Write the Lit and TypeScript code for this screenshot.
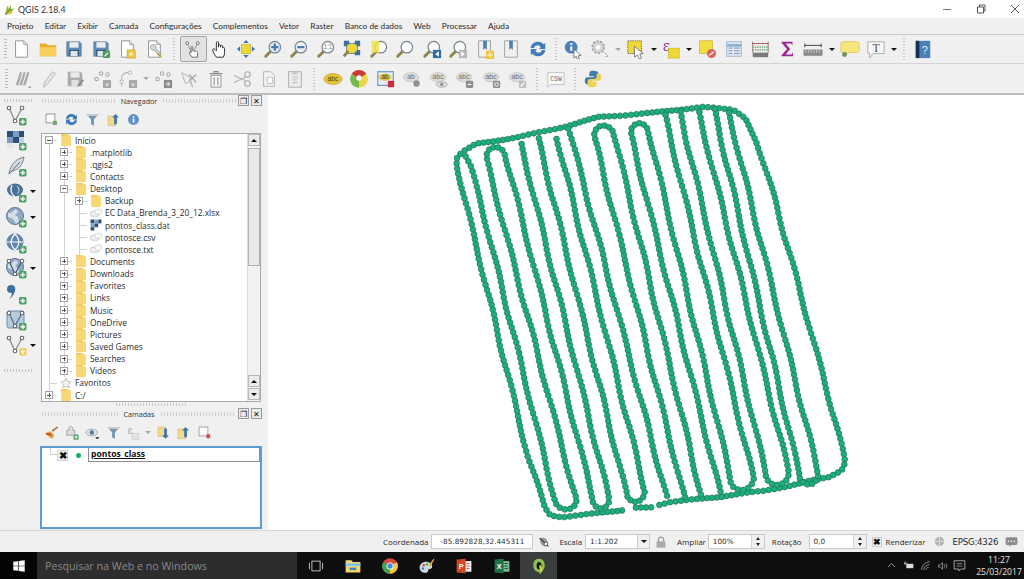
import { LitElement, html, css, svg, nothing } from 'lit';
import { customElement } from 'lit/decorators.js';

type Pt = [number, number];

// lane x at y=200 and y=420, left to right across the field
const X200 = [465, 480, 497, 517, 533, 553, 575, 591, 610, 630, 647, 665, 680, 700, 717, 737, 750, 775];
const X420 = [519, 535, 555, 573, 589, 608, 628, 647, 665, 683, 702, 717, 738, 753, 775, 787, 805, 835];

const lx = (i: number, y: number) => X200[i] + ((X420[i] - X200[i]) * (y - 200)) / 220;
const lane = (i: number, y: number): Pt => [lx(i, y), y];

function hairpin(a: number, b: number, crown: number, top: boolean): Pt[] {
  const r = (lx(b, crown) - lx(a, crown)) / 2;
  const yc = top ? crown + r : crown - r;
  const x1 = lx(a, yc);
  const x2 = lx(b, yc);
  const out: Pt[] = [];
  for (let k = 0; k <= 8; k++) {
    const t = (k / 8) * Math.PI;
    const cx = (x1 + x2) / 2;
    const rr = (x2 - x1) / 2;
    out.push([cx - rr * Math.cos(t), yc + (top ? -1 : 1) * rr * Math.sin(t)]);
  }
  return out;
}

const TRACKS: Pt[][] = [
  // outer loop: bottom left, up the west edge, along the top, down the east edge, back along the bottom
  [
    [622, 510], [590, 514], [563, 517], [551, 515], [545, 507], lane(0, 460), lane(0, 200),
    [457, 165], [457, 157], [462, 152], [475, 144], [520, 137], [562, 127], [600, 117], [650, 113],
    [703, 107], [733, 110], [745, 118], [757, 142], lane(17, 200), lane(17, 420), [845, 462], [842, 470],
    [830, 477], [763, 491], [717, 497], [670, 502], [658, 505],
  ],
  [[652, 507], [633, 508]],
  // the inner passes, joined by their turns
  [
    [466, 157], [470, 165], lane(1, 200),
    ...hairpin(1, 2, 510, false),
    ...hairpin(2, 3, 147, true),
    ...hairpin(3, 4, 508, false),
    [520, 140],
  ],
  [[538, 138], ...hairpin(5, 6, 502, false), [557, 138]],
  [[569, 129], lane(7, 497)],
  [lane(8, 497), ...hairpin(8, 9, 125, true), lane(9, 497)],
  [lane(10, 497), ...hairpin(10, 11, 123, true), ...hairpin(11, 12, 490, false), [664, 112]],
  [[680, 112], ...hairpin(13, 14, 485, false), [698, 110]],
  [[714, 109], ...hairpin(15, 16, 485, false), [728, 110]],
];

function resample(points: Pt[], step: number): Pt[] {
  const out: Pt[] = [points[0]];
  let left = step;
  for (let i = 1; i < points.length; i++) {
    let [x0, y0] = points[i - 1];
    const [x1, y1] = points[i];
    let d = Math.hypot(x1 - x0, y1 - y0);
    while (d >= left) {
      x0 += ((x1 - x0) * left) / d;
      y0 += ((y1 - y0) * left) / d;
      out.push([x0, y0]);
      d -= left;
      left = step;
    }
    left -= d;
  }
  return out;
}

const DOTS = TRACKS.flatMap((t) => resample(t, 5.2)).map(([x, y], i): Pt => [
  x + Math.sin(i * 0.37) * 0.9,
  y + Math.cos(i * 0.53) * 0.4,
]);

@customElement('track-map')
export class TrackMap extends LitElement {
  static styles = css`
    :host {
      display: block;
      flex: 1;
      background: #fff;
    }
    svg {
      display: block;
      width: 100%;
      height: 100%;
    }
  `;

  render() {
    return html`<svg viewBox="268 96 756 433">
      <g fill="#17b07e" stroke="#2f6f58" stroke-width="0.7">
        ${DOTS.map(([x, y]) => svg`<circle cx=${x.toFixed(1)} cy=${y.toFixed(1)} r="2.9"></circle>`)}
      </g>
    </svg>`;
  }
}

/* ---- icons, all on a 22 unit box ---- */

const magnifier = (inner: unknown = nothing, lens = '#fff') => svg`
  <path d="M8 14 3 19" stroke="#8f8449" stroke-width="3.2" stroke-linecap="round"/>
  <circle cx="13" cy="9" r="6.3" fill=${lens} stroke="#76848e" stroke-width="1.3"/>
  ${inner}`;

const floppy = (c: string) => svg`
  <path d="M3 3h14l2 2v14H3z" fill=${c} stroke="#5d6f83" stroke-width=".6"/>
  <rect x="6" y="3.5" width="10" height="6" fill="#e9eef3"/>
  <rect x="6" y="12" width="10" height="7" fill="#22384f"/>
  <rect x="7" y="13" width="8" height="6" fill="#dfe5ea"/>`;

const plusBadge = svg`<rect x="14" y="14" width="7.5" height="7.5" rx="1.4" fill="#4fa365"/><path d="M17.75 15.5v4.5M15.5 17.75H20" stroke="#fff" stroke-width="1.4"/>`;
const page = (fill = '#fff') => svg`<path d="M5 2h9l4 4v14H5z" fill=${fill} stroke="#8d8d8d" stroke-width="1"/><path d="M14 2v4h4" fill="#e4e4e4" stroke="#8d8d8d" stroke-width=".8"/>`;
const hand = (c: string) => svg`<path d="M7 20c-2-3-4-6-4-8 0-1.500 1.500-1.500 2.500-.5L7 13V4c0-1.500 2.300-1.500 2.300 0v5-1.500c0-1.500 2.300-1.500 2.300 0V9 8c0-1.500 2.300-1.500 2.300 0v2c0-1 2.100-1 2.100.3V15c0 2-.5 3.500-1.500 5z" fill="#fff" stroke=${c} stroke-width="1.100"/>`;
const grayAbc = (t: string, after: unknown = nothing) => svg`
  <ellipse cx="10" cy="9" rx="8.500" ry="5" fill="#dcdcdc" stroke="#b4b4b4" stroke-width=".6"/>
  <text x="10" y="11.500" font-size="7.500" text-anchor="middle" fill="#6f6f6f" font-family="Liberation Sans">${t}</text>${after}`;
const grayPts = (after: unknown) => svg`<g fill="#fff" stroke="#a8a8a8" stroke-width="1.200"><circle cx="5" cy="11" r="1.800"/><circle cx="10" cy="5" r="1.800"/><circle cx="17" cy="6" r="1.800"/></g>${after}`;
const grayBox = (inner = '') => svg`<rect x="12" y="12" width="9" height="9" rx="1" fill="#a7a7a7"/><text x="16.500" y="19.500" font-size="7" text-anchor="middle" fill="#fff" font-family="Liberation Sans">${inner}</text>`;
const vNodes = (c = '#7c8b7a') => svg`<path d="M4 4 10 17 17 4" fill="none" stroke=${c} stroke-width="1.200"/><g fill="#fff" stroke="#666" stroke-width="1.100"><circle cx="4" cy="4" r="1.800"/><circle cx="17" cy="4" r="1.800"/><circle cx="10" cy="17" r="1.800"/></g>`;
const globe = svg`<circle cx="10" cy="10" r="8.500" fill="#8ea8c6" stroke="#5d7796" stroke-width="1"/><path d="M3 7c4 1 5-3 8-4l2 3-3 3 3 2 1 4-3 3-3-5-5-2z" fill="#d5dde6"/>`;
const pageGray = svg`<path d="M5 3h8l4 4v12H5z" fill="#f3f3f3" stroke="#b0b0b0"/>`;

const ICONS: Record<string, unknown> = {
  logo: svg`<path d="M3 20 8 4l2 6 3-7 1 8 5-3-6 10z" fill="#8ab53a"/><path d="M5 19 11 11l5 7z" fill="#e7c72d"/><path d="M4 20 14 10" stroke="#3f7d22" stroke-width="1.500"/>`,
  new: page(),
  open: svg`<path d="M2 5h7l2 2h9v12H2z" fill="#e9ad32"/><path d="M2 9h18v10H2z" fill="#f9cd5a"/>`,
  save: floppy('#5e8cbd'),
  saveas: svg`${floppy('#5e8cbd')}<rect x="13" y="13" width="8" height="8" rx="1.500" fill="#4b9a5e"/><path d="M15 19l4-4" stroke="#fff" stroke-width="1.300"/>`,
  newcomp: svg`${page()}<rect x="11" y="12" width="9" height="9" fill="#f0c53c" stroke="#b69322" stroke-width=".5"/><path d="M13 16.500h5M15.500 14v5" stroke="#fff"/>`,
  compman: svg`${page()}<path d="M8 7c3-2 6 0 5 3l6 7-2 2-6-7c-3 1-5-2-3-5" fill="#d9d9d9" stroke="#777" stroke-width=".7"/><path d="M15 16l4 4" stroke="#c7a431" stroke-width="2"/>`,
  touch: svg`<g transform="translate(1 1) scale(.9)">${vNodes('#9a9a9a')}</g><path d="M10 20c-1-2-3-3-3-5 0-1 1-1 2 0V9c0-1 1.700-1 1.700 0v4l4 .5c1 .2 1.300 1 1.300 2L16 20z" fill="#fff" stroke="#555" stroke-width=".9"/>`,
  pan: svg`${hand('#333')}`,
  panmap: svg`<rect x="6" y="6" width="10" height="10" fill="#eed83a" stroke="#b59f12" stroke-width=".6"/><path d="M11 1l3 3.500H8zM11 21l3-3.500H8zM1 11l3.500-3v6zM21 11l-3.500-3v6z" fill="#3b74b3"/>`,
  zoomin: magnifier(svg`<path d="M13 5v8M9 9h8" stroke="#3f79b8" stroke-width="2.400"/>`, '#e7eef6'),
  zoomout: magnifier(svg`<path d="M9 9h8" stroke="#3f79b8" stroke-width="2.400"/>`, '#eef1f4'),
  zoom11: magnifier(svg`<text x="13" y="11.500" font-size="7" text-anchor="middle" fill="#777" font-family="Liberation Sans">1:1</text>`),
  zoomfull: svg`<rect x="5" y="5" width="12" height="11" fill="#eed83a" stroke="#5b6f80" stroke-width=".8"/><path d="M2 2h6v4H6v2H2zM20 2h-6v4h2v2h4zM20 18h-6v-4h2v-2h4z" fill="#3d6f9f"/><path d="M7 13 2 19" stroke="#8f8449" stroke-width="3"/>`,
  zoomsel: magnifier(svg`<rect x="3" y="2" width="8" height="13" fill="#f0e04d" opacity=".85"/>`),
  zoomlayer: magnifier(nothing),
  zoomlast: magnifier(svg`<rect x="12" y="12" width="9" height="9" fill="#2f6ca8"/><path d="M18.500 13.500 14.500 16.500l4 3z" fill="#fff"/>`),
  zoomnext: magnifier(svg`<rect x="12" y="12" width="9" height="9" fill="#b8b8b8"/><path d="M14.500 13.500l4 3-4 3z" fill="#fff"/>`),
  bookmark: svg`<path d="M4 2h13v18H4z" fill="#f1f1f1" stroke="#9c9c9c"/><path d="M9 2h4v10l-2-2-2 2z" fill="#4e7fb1"/><rect x="12" y="13" width="9" height="9" fill="#efc53a"/><path d="M16.500 14.500v6M13.500 17.500h6" stroke="#fff"/>`,
  bookmarks: svg`<path d="M4 2h14v18H4z" fill="#f1f1f1" stroke="#9c9c9c"/><path d="M9 2h4v10l-2-2-2 2z" fill="#4e7fb1"/>`,
  refresh: svg`<path d="M3 10c0-4 4-7 8-7 3 0 5 1 6 3l2-2v7h-7l2-2c-1-1-2-2-3-2-3 0-4 1-4 3zM19 12c0 4-4 7-8 7-3 0-5-1-6-3l-2 2v-7h7l-2 2c1 1 2 2 3 2 3 0 4-1 4-3z" fill="#3f7cb7"/>`,
  identify: svg`<circle cx="9" cy="9" r="7" fill="#4c82b9"/><rect x="8" y="8" width="2.200" height="5" fill="#fff"/><rect x="8" y="4.500" width="2.200" height="2" fill="#fff"/><path d="M12 11l8 7-3.500.5L18 22l-2 .5-1.500-3.500-2.500 2z" fill="#fff" stroke="#555" stroke-width=".8"/>`,
  action: svg`<circle cx="9" cy="9" r="6.500" fill="#d4d4d4" stroke="#a3a3a3" stroke-width="2" stroke-dasharray="2.500 1.500"/><circle cx="9" cy="9" r="2.500" fill="#fff"/><path d="M12 12l8 7-3.500.5" fill="#fff" stroke="#999" stroke-width=".8"/>`,
  select: svg`<rect x="2" y="2" width="15" height="14" fill="#eed83a" stroke="#444" stroke-width=".8" stroke-dasharray="1.500 1"/><path d="M9 8l10 8-4 .5 2 4.500-2.500 1-2-4.500-3 2.500z" fill="#fff" stroke="#555" stroke-width=".8"/>`,
  epsilon: svg`<text x="6" y="13" font-size="16" fill="#8a3b8e" text-anchor="middle" font-family="DejaVu Serif">ε</text><rect x="8" y="10" width="12" height="11" fill="#eed83a" stroke="#b59f12" stroke-width=".5"/>`,
  epsilonGray: svg`<text x="6" y="13" font-size="15" fill="#a3a3a3" text-anchor="middle" font-family="DejaVu Serif">ε</text><rect x="9" y="12" width="10" height="9" fill="#e2e2e2" stroke="#bdbdbd" stroke-width=".6"/>`,
  deselect: svg`<rect x="3" y="2" width="14" height="14" fill="#f4df42" stroke="#b8a11a" stroke-width=".6"/><circle cx="16" cy="16" r="5" fill="#d9665f"/><path d="M13.500 18 18.500 14" stroke="#fff" stroke-width="1.300"/>`,
  table: svg`<rect x="3" y="3" width="16" height="16" fill="#dce7f2" stroke="#9db4cb"/><path d="M3 7h16" stroke="#8eb0d2" stroke-width="3"/><path d="M5 10h4M11 10h6M5 13h4M11 13h6M5 16h4M11 16h6" stroke="#7e94aa"/>`,
  stats: svg`<rect x="3" y="15" width="17" height="5" fill="#7a7a7a"/><path d="M3 15V3M20 15V3" stroke="#8a6d65"/><path d="M3 5h17" stroke="#a65b5b"/><path d="M3 9h17M3 12h17" stroke="#83b08b" stroke-width="2" stroke-dasharray="1.500 1"/><path d="M3 5h17" stroke="#b44" stroke-dasharray="2 3"/>`,
  sigma: svg`<path d="M5 3h12v4l-1.500-2H9.500l5 6-5 6H16l1.500-2.500V19H5v-1l6-7-6-7z" fill="#a1259b"/>`,
  ruler: svg`<rect x="1" y="12" width="20" height="6" fill="#8d8d8d" stroke="#666" stroke-width=".5"/><path d="M3 12v3M6 12v3M9 12v3M12 12v3M15 12v3M18 12v3" stroke="#eee" stroke-width=".7"/><path d="M2 7h18M2 5v4M20 5v4" stroke="#333"/>`,
  balloon: svg`<path d="M4 3h14c2 0 3 1 3 3v6c0 2-1 3-3 3H9l-4 4-1-4c-2 0-3-1-3-3V6c0-2 1-3 3-3z" fill="#f7e77d" stroke="#d8c85e"/><circle cx="5" cy="17" r="2.700" fill="#6f8f5e"/>`,
  textbox: svg`<path d="M2 3h18v13H8l-4 5v-5H2z" fill="#f6f6f6" stroke="#a8a8a8"/><text x="11" y="14" font-size="13" text-anchor="middle" fill="#555" font-family="Liberation Serif">T</text>`,
  help: svg`<rect x="3" y="2" width="16" height="19" fill="#4d80b7"/><rect x="3" y="2" width="4" height="19" fill="#17314d"/><text x="13" y="16" font-size="12" text-anchor="middle" fill="#e6eef5" font-family="Liberation Sans">?</text>`,
  digit: svg`<path d="M4 18 9 3l2 1-4 14zM8 18 13 3l2 1-4 14zM12 18 17 3l2 1-4 14z" fill="#a9a9a9"/><path d="M18 20h3" stroke="#777"/>`,
  pencil: svg`<path d="M5 20l1-5L15 3l3 2-9 12z" fill="#e7e7e7" stroke="#b5b5b5"/>`,
  savegray: svg`<path d="M3 3h14l2 2v14H3z" fill="#aaa"/><rect x="6" y="3.500" width="10" height="6" fill="#e9e9e9"/><rect x="7" y="12" width="8" height="7" fill="#e0e0e0"/><path d="M14 19l6-7" stroke="#888" stroke-width="2"/>`,
  addpt: grayPts(grayBox('×')),
  node: svg`<path d="M4 19V10c0-4 3-6 8-6" fill="none" stroke="#b3b3b3" stroke-width="1.200"/><circle cx="13" cy="4" r="1.800" fill="#fff" stroke="#aaa"/><circle cx="4" cy="14" r="1.800" fill="#fff" stroke="#aaa"/>${grayBox('×')}`,
  movept: grayPts(svg`<rect x="12" y="12" width="9" height="9" fill="#8c8c8c"/><path d="M14 16.500h4M16 14.500l2.500 2-2.500 2" stroke="#fff" fill="none"/>`),
  nodetool: svg`<path d="M3 4l9 5 3 11-3-6-5 2z" fill="none" stroke="#b1b1b1"/><path d="M11 13l8-7M11 6l8 9" stroke="#a3a3a3" stroke-width="1.300"/>`,
  trash: svg`<path d="M4 5h14M9 5V3h4v2" stroke="#8a8a8a" fill="none" stroke-width="1.400"/><path d="M5.500 7h11v13h-11z" fill="#f7f7f7" stroke="#8f8f8f"/><path d="M9 9v9M13 9v9" stroke="#999" stroke-width="1.300"/>`,
  cut: svg`<path d="M2 7l13 6M2 15l13-6" stroke="#b9b9b9" stroke-width="1.300"/><circle cx="17" cy="6" r="3" fill="none" stroke="#a5a5a5" stroke-width="1.200"/><circle cx="17" cy="16" r="3" fill="none" stroke="#a5a5a5" stroke-width="1.200"/>`,
  copy: svg`${pageGray}<path d="M9 9h6v7H9z" fill="#fff" stroke="#bbb"/>`,
  paste: svg`<rect x="4" y="3" width="14" height="17" fill="#ececec" stroke="#aaa"/><path d="M8 3h6v3H8z" fill="#c9c9c9"/><path d="M8 9h6M8 12h6M8 15h6" stroke="#b7b7b7"/>`,
  abcY: svg`<ellipse cx="11" cy="11" rx="10" ry="6" fill="#e9c233" stroke="#b3931b" stroke-width=".6"/><text x="11" y="13.500" font-size="7.500" text-anchor="middle" fill="#4d4315" font-family="Liberation Sans">abc</text>`,
  wheel: svg`<circle cx="11" cy="11" r="9.500" fill="#f3f3f3"/><path d="M11 11 3 5.500A9.500 9.500 0 0 1 19 5.500z" fill="#cc3a33"/><path d="M11 11V20.500A9.500 9.500 0 0 1 3 5.500z" fill="#78b94b"/><path d="M11 11V20.500A9.500 9.500 0 0 0 19 5.500z" fill="#ecd748"/><circle cx="11" cy="10" r="3" fill="#fff"/>`,
  abLock: svg`<rect x="2" y="3" width="17" height="15" fill="#e7eef6" stroke="#5d93c8" stroke-width="1.200"/><ellipse cx="10" cy="9" rx="7" ry="4" fill="#e5c244"/><text x="10" y="11.500" font-size="7" text-anchor="middle" fill="#333" font-family="Liberation Sans">ab</text><rect x="13" y="13" width="7" height="7" rx="1" fill="#c72e3d"/>`,
  abPin: grayAbc('ab', svg`<circle cx="16" cy="16" r="3.500" fill="#8f8f8f"/>`),
  abEye: grayAbc('abc', svg`<ellipse cx="14" cy="17" rx="6" ry="3" fill="#ddd" stroke="#888" stroke-width=".6"/><circle cx="14" cy="17" r="1.500" fill="#777"/>`),
  abMove: grayAbc('abc', svg`<rect x="12" y="13" width="8" height="8" rx="1.500" fill="#8f8f8f"/><path d="M14 17h4" stroke="#fff" stroke-width="1.300"/>`),
  abRot: grayAbc('abc', svg`<rect x="12" y="13" width="8" height="8" rx="1.500" fill="#8f8f8f"/><circle cx="16" cy="17" r="2" fill="none" stroke="#fff"/>`),
  abEdit: grayAbc('abc', svg`<rect x="12" y="13" width="8" height="8" rx="1" fill="#c1c1c1"/><path d="M14 19l4-4" stroke="#fff" stroke-width="1.300"/>`),
  csw: svg`<path d="M2 4h18v13H5l-3 3z" fill="#fafafa" stroke="#bdbdbd"/><text x="11" y="13" font-size="7" text-anchor="middle" fill="#666" font-family="Liberation Mono">CSW</text>`,
  python: svg`<path d="M11 2C7 2 7 4 7 6v2h5v1H5C3 9 2 10 2 13s1 4 3 4h2v-3c0-2 1-3 3-3h4c2 0 3-1 3-3V5c0-2-2-3-6-3z" fill="#3f7bac"/><path d="M11 20c4 0 4-2 4-4v-2h-5v-1h7c2 0 3-1 3-4s-1-4-3-4h-2v3c0 2-1 3-3 3H8c-2 0-3 1-3 3v3c0 2 2 3 6 3z" fill="#f0cf52"/>`,
  addLine: svg`${vNodes()}${plusBadge}`,
  addRaster: svg`<g fill="#2d5078"><rect x="2" y="2" width="6" height="6"/><rect x="14" y="2" width="5" height="6"/><rect x="8" y="8" width="6" height="6"/></g><g fill="#7d9cc0"><rect x="8" y="2" width="6" height="6"/><rect x="2" y="8" width="6" height="6"/></g><rect x="14" y="8" width="5" height="6" fill="#bfd0e2"/><rect x="2" y="14" width="6" height="5" fill="#dfe7ef"/>${plusBadge}`,
  addCsv: svg`<path d="M4 18C6 9 11 4 19 2c-1 7-5 13-12 14l-3 3z" fill="#d3dbe2" stroke="#5d6b77" stroke-width=".8"/><path d="M4 19 15 7" stroke="#67727c"/>${plusBadge}`,
  addPg: svg`<ellipse cx="10" cy="9" rx="8" ry="6.500" fill="#4a7398"/><path d="M7 4c-2 4-1 9 2 11l2 3" fill="none" stroke="#fff" stroke-width="1.300"/><path d="M12 5c3 2 2 7 0 8" fill="none" stroke="#cfe0ee"/>${plusBadge}`,
  addWorld: svg`${globe}${plusBadge}`,
  addWcs: svg`<circle cx="10" cy="10" r="8.500" fill="#6187af"/><path d="M2 10h16M10 2c-5 5-5 11 0 16M10 2c5 5 5 11 0 16" fill="none" stroke="#fff" stroke-width="1.200"/>${plusBadge}`,
  addWfs: svg`${globe}${vNodes('#3d5773')}${plusBadge}`,
  addOra: svg`<path d="M6 2c3 0 5 2 4 6s-4 7-6 8c2-2 3-4 3-6-3 0-5-1-5-4s2-4 4-4z" fill="#3b6f9e"/>${plusBadge}`,
  addVl: svg`<rect x="2" y="2" width="17" height="17" rx="2" fill="#b8cbde" stroke="#6f8cac"/>${vNodes('#4d6b8a')}${plusBadge}`,
  newLayer: svg`${vNodes()}<rect x="14" y="14" width="7.500" height="7.500" rx="1.400" fill="#f1cf5b"/><path d="M17.750 15.500v4.500M15.500 17.750H20" stroke="#fff"/>`,
  boxSel: svg`<rect x="3" y="3" width="13" height="13" fill="#fff" stroke="#6f6f6f"/><rect x="13" y="13" width="6" height="6" fill="#75a56f"/>`,
  filter: svg`<path d="M2 3h18l-7 8v9l-4-2v-7z" fill="#6f95b5"/><path d="M2 3h18l-2 3H4z" fill="#c9c9c9"/>`,
  collapse: svg`<path d="M3 6h11v14H3z" fill="#f1d98e" stroke="#b9a15a" stroke-width=".6"/><path d="M14 3l5 5h-3v10h-4V8H9z" fill="#3f74aa"/>`,
  expand: svg`<path d="M3 3h11v14H3z" fill="#f1d98e" stroke="#b9a15a" stroke-width=".6"/><path d="M14 20l5-5h-3V5h-4v10H9z" fill="#3f74aa"/>`,
  info: svg`<circle cx="11" cy="11" r="8" fill="#5d92c7"/><rect x="10" y="9.500" width="2.300" height="6" fill="#fff"/><rect x="10" y="6" width="2.300" height="2.200" fill="#fff"/>`,
  brush: svg`<path d="M2 12l7-3 6 6-3 5c-3-2-7-4-10-8z" fill="#e49a33"/><path d="M3 13l8 1" stroke="#bb3a2c" stroke-width="2"/><path d="M12 9l8-6" stroke="#8a6a2a" stroke-width="2"/>`,
  addGroup: svg`<path d="M7 5c0-4 6-4 6 0v3h3v7H4V8h3z" fill="#dcdcdc" stroke="#8d8d8d"/>${plusBadge}`,
  eye: svg`<ellipse cx="10" cy="11" rx="8.500" ry="5" fill="#dfe4e9" stroke="#8397a8"/><circle cx="10" cy="11" r="3.200" fill="#5b7895"/><path d="M15 18h6l-3 3z" fill="#111"/>`,
  removeBox: svg`<rect x="3" y="3" width="13" height="13" fill="#fff" stroke="#7d7d7d"/><circle cx="16.500" cy="16.500" r="3.200" fill="#c95858"/>`,
  mouse: svg`<ellipse cx="11" cy="11" rx="5.500" ry="7.500" fill="#9a9a9a" transform="rotate(-35 11 11)"/><path d="M4 5l14 13" stroke="#333" stroke-width="1.800"/><circle cx="14" cy="14" r="2.800" fill="#fff" stroke="#333"/>`,
  lock: svg`<path d="M7 10V7c0-5 8-5 8 0v3" fill="none" stroke="#9d9d9d" stroke-width="2"/><rect x="4" y="10" width="14" height="10" rx="1" fill="#aaa"/>`,
  statGlobe: svg`<circle cx="11" cy="11" r="8" fill="#b4b4b4"/><path d="M3 11h16M11 3v16" stroke="#d9d9d9" stroke-width="1.600"/>`,
  msg: svg`<path d="M3 4h16c1 0 2 1 2 2v9c0 1-1 2-2 2h-8l-4 3v-3H3c-1 0-2-1-2-2V6c0-1 1-2 2-2z" fill="#8d8d8d"/><g fill="#fff"><circle cx="6" cy="10.500" r="1.300"/><circle cx="11" cy="10.500" r="1.300"/><circle cx="16" cy="10.500" r="1.300"/></g>`,
  file: svg`<rect x="1" y="8" width="15" height="9" rx="3" fill="#f2f2f2" stroke="#a9a9a9"/><rect x="9" y="4" width="12" height="9" rx="3" fill="#fbfbfb" stroke="#b8b8b8"/>`,
  folder: svg`<path d="M2 0h11l7 3v19H2z" fill="#f8d777"/><path d="M2 0h11v3H2z" fill="#f3c95a"/>`,
  star: svg`<path d="M11 2l3 6 6 1-4.500 4.500L17 20l-6-3-6 3 1.500-6.500L2 9l6-1z" fill="#f4f4f4" stroke="#9c9c78"/>`,
  rasterFile: svg`<g fill="#2d5078"><rect x="1" y="1" width="7" height="7"/><rect x="15" y="1" width="6" height="7"/><rect x="8" y="8" width="7" height="7"/><rect x="1" y="15" width="7" height="6"/></g><g fill="#85a3c5"><rect x="8" y="1" width="7" height="7"/><rect x="1" y="8" width="7" height="7"/></g>`,
  // taskbar
  win: svg`<path d="M2 4.500 9.500 3.500V10.500H2zM10.500 3.300 20 2V10.500H10.500zM2 11.500H9.500V18.500L2 17.500zM10.500 11.500H20V20L10.500 18.700z" fill="#fff"/>`,
  taskview: svg`<rect x="6" y="5" width="10" height="12" fill="none" stroke="#ddd"/><path d="M3 7v8M19 7v8" stroke="#ddd"/>`,
  explorer: svg`<path d="M2 4h7l2 2h9v13H2z" fill="#f3d374"/><rect x="2" y="8" width="18" height="3" fill="#75c7ea"/><rect x="7" y="13" width="8" height="3" fill="#3889b8"/>`,
  chrome: svg`<circle cx="11" cy="11" r="9.500" fill="#da4a3c"/><path d="M11 11 19.500 6.500A9.500 9.500 0 0 1 11 20.500z" fill="#f4c93a"/><path d="M11 11V20.500A9.500 9.500 0 0 1 2.800 6z" fill="#3ea555"/><circle cx="11" cy="11" r="4.300" fill="#fff"/><circle cx="11" cy="11" r="3.300" fill="#4a89dc"/>`,
  paint: svg`<path d="M2 13c0-5 5-8 10-7 4 1 6 4 5 7-1 2-3 1-4 2s0 3-2 4c-4 1-9-1-9-6z" fill="#cdd9e3"/><circle cx="7" cy="10" r="1.500" fill="#d94b3c"/><circle cx="11" cy="9" r="1.500" fill="#39a34a"/><circle cx="6" cy="14" r="1.500" fill="#3a7fc4"/><path d="M13 10 19 2l1 1-5 9z" fill="#e9b63b"/>`,
  ppt: svg`<rect x="9" y="5" width="11" height="13" fill="#f4f4f4"/><path d="M2 3l11-1v18L2 19z" fill="#d24726"/><text x="7.500" y="14.500" font-size="9" text-anchor="middle" fill="#fff" font-family="Liberation Sans" font-weight="700">P</text><path d="M14 8h4M14 11h4M14 14h4" stroke="#d24726"/>`,
  excel: svg`<rect x="9" y="5" width="11" height="13" fill="#7dbb95"/><path d="M2 3l11-1v18L2 19z" fill="#1f7246"/><text x="7.500" y="14.500" font-size="9" text-anchor="middle" fill="#fff" font-family="Liberation Sans" font-weight="700">X</text><path d="M14 8h4M14 11h4M14 14h4" stroke="#123"/>`,
  qgis: svg`<path d="M11 2c-5 0-7 4-7 8 0 5 3 8 6 8l3 3 1-3c3-2 4-5 4-8 0-4-2-8-7-8z" fill="#8cc24a"/><path d="M11 6c-2 0-3 2-3 5 0 2 1 3 2 4h2c1-1 2-3 2-5 0-2-1-4-3-4z" fill="#111"/><path d="M12 10l2 8" stroke="#f1d548" stroke-width="2"/>`,
  trayUp: svg`<path d="M4 14l7-7 7 7" fill="none" stroke="#ddd" stroke-width="1.300"/>`,
  trayBat: svg`<rect x="6" y="7" width="13" height="8" fill="#ddd"/><path d="M3 3l6 4" stroke="#ddd"/><rect x="2" y="5" width="3" height="3" fill="#ddd"/>`,
  trayWifi: svg`<path d="M3 18C3 10 10 4 18 3M7 18C7 13 12 9 17 8M11 18c0-2 2-5 5-5" fill="none" stroke="#ddd" stroke-width="1.100"/>`,
  traySound: svg`<path d="M3 9h3l4-4v12l-4-4H3z" fill="none" stroke="#ddd"/><path d="M13 8c1.500 2 1.500 4 0 6M16 6c2.500 3 2.500 7 0 10" fill="none" stroke="#ddd"/>`,
  trayChat: svg`<path d="M2 3h18v14h-7l-3 3v-3H2z" fill="none" stroke="#ddd" stroke-width="1.200"/><path d="M6 8h10M6 12h10" stroke="#ddd"/>`,
};

const ico = (name: string, size = 20) =>
  html`<svg class="ico" width=${size} height=${size} viewBox="0 0 22 22">${ICONS[name]}</svg>`;

type ToolItem = string | { sep: number } | { arrow: number; dim?: boolean } | { active: string };

const TOOLBAR_ONE: ToolItem[] = [
  'new', 'open', 'save', 'saveas', 'newcomp', 'compman', { sep: 13 }, { active: 'touch' }, 'pan', 'panmap',
  'zoomin', 'zoomout', 'zoom11', 'zoomfull', 'zoomsel', 'zoomlayer', 'zoomlast', 'zoomnext', 'bookmark',
  'bookmarks', 'refresh', { sep: 9 }, 'identify', 'action', { arrow: 10, dim: true }, 'select', { arrow: 8 },
  'epsilon', { arrow: 10 }, 'deselect', 'table', 'stats', 'sigma', 'ruler', { arrow: 10 }, 'balloon', 'textbox',
  { arrow: 8 }, { sep: 12 }, 'help',
];

const TOOLBAR_TWO: ToolItem[] = [
  'digit', 'pencil', 'savegray', 'addpt', 'node', { arrow: 8, dim: true }, 'movept', 'nodetool', 'trash', 'cut',
  'copy', 'paste', { sep: 11 }, 'abcY', 'wheel', 'abLock', 'abPin', 'abEye', 'abMove', 'abRot', 'abEdit',
  { sep: 11 }, 'csw', { sep: 11 }, 'python',
];

type TreeRow = { label: string; level: number; exp?: '+' | '-'; icon: string };

const dir = (label: string, level = 1, exp: '+' | '-' = '+'): TreeRow => ({ label, level, exp, icon: 'folder' });

const TREE: TreeRow[] = [
  dir('Início', 0, '-'),
  dir('.matplotlib'),
  dir('.qgis2'),
  dir('Contacts'),
  dir('Desktop', 1, '-'),
  dir('Backup', 2),
  { label: 'EC Data_Brenda_3_20_12.xlsx', level: 2, icon: 'file' },
  { label: 'pontos_class.dat', level: 2, icon: 'rasterFile' },
  { label: 'pontosce.csv', level: 2, icon: 'file' },
  { label: 'pontosce.txt', level: 2, icon: 'file' },
  dir('Documents'),
  dir('Downloads'),
  dir('Favorites'),
  dir('Links'),
  dir('Music'),
  dir('OneDrive'),
  dir('Pictures'),
  dir('Saved Games'),
  dir('Searches'),
  dir('Videos'),
  { label: 'Favoritos', level: 0, icon: 'star' },
  dir('C:/', 0),
];

const MENUS = ['Projeto', 'Editar', 'Exibir', 'Camada', 'Configurações', 'Complementos', 'Vetor', 'Raster', 'Banco de dados', 'Web', 'Processar', 'Ajuda'];
const SIDE_TOOLS: [string, boolean][] = [
  ['addLine', false], ['addRaster', false], ['addCsv', false], ['addPg', true], ['addWorld', true], ['addWcs', false],
  ['addWfs', true], ['addOra', false], ['addVl', false], ['newLayer', true],
];
const NAV_TOOLS = ['boxSel', 'refresh', 'filter', 'collapse', 'info'];
const TASK_APPS = ['explorer', 'chrome', 'paint', 'ppt', 'excel'];

@customElement('app-root')
export class AppRoot extends LitElement {
  static styles = css`
    :host {
      display: flex;
      flex-direction: column;
      width: 1024px;
      height: 579px;
      overflow: hidden;
      background: #f0f0f0;
      color: #2a2a2a;
      font-family: 'Open Sans', 'Liberation Sans', sans-serif;
      font-size: 8.4px;
    }
    .ico {
      display: block;
      flex: none;
    }
    .titlebar {
      display: flex;
      align-items: center;
      height: 18px;
      background: #fff;
      padding-left: 3px;
      font-family: Lato, 'Open Sans', sans-serif;
      font-size: 8.8px;
      color: #333;
    }
    .titlebar .name {
      margin-left: 2px;
      flex: 1;
    }
    .winbtn {
      width: 34px;
      display: flex;
      justify-content: center;
    }
    .winbtn:last-child {
      width: 18px;
      margin-left: 8px;
    }
    .menubar {
      display: flex;
      align-items: center;
      gap: 11.2px;
      height: 16px;
      padding-left: 7px;
      border-bottom: 1px solid #c9c9c9;
      font-family: Lato, 'Open Sans', sans-serif;
      font-size: 8.3px;
    }
    .toolbar {
      display: flex;
      align-items: center;
      height: 28px;
      padding-left: 8px;
      border-bottom: 1px solid #d4d4d4;
    }
    .toolbar.second {
      height: 29px;
      border-bottom: 2px solid #bdbdbd;
      padding-left: 9px;
    }
    .hgrip {
      width: 3px;
      height: 20px;
      margin-left: -4px;
      margin-right: 1px;
      background: repeating-linear-gradient(180deg, #bdbdbd 0 1px, transparent 1px 3px);
    }
    .tool {
      flex: none;
      width: 26.5px;
      height: 24px;
      display: flex;
      align-items: center;
      justify-content: center;
      box-sizing: border-box;
    }
    .tool.active {
      height: 26px;
      background: #e2e2e2;
      border: 1px solid #a4a4a4;
      border-radius: 2px;
    }
    .arrow {
      flex: none;
      display: flex;
      justify-content: center;
    }
    .arrow i {
      width: 0;
      height: 0;
      border: 3.2px solid transparent;
      border-top: 3.6px solid #111;
      border-bottom: 0;
    }
    .arrow.dim i {
      border-top-color: #a8a8a8;
    }
    .sep {
      flex: none;
      display: flex;
      justify-content: center;
      height: 22px;
    }
    .sep i {
      width: 2px;
      background: repeating-linear-gradient(180deg, #c4c4c4 0 1px, transparent 1px 3px);
    }
    .main {
      flex: 1;
      display: flex;
      min-height: 0;
    }
    .side {
      width: 38px;
      flex: none;
      display: flex;
      flex-direction: column;
      padding-top: 4px;
      box-sizing: border-box;
      margin-right: 2px;
    }
    .vgrip {
      height: 3px;
      flex: none;
      margin: 0 6px 0 4px;
      background: repeating-linear-gradient(90deg, #c4c4c4 0 1px, transparent 1px 3px);
    }
    .side .slot {
      height: 25.6px;
      flex: none;
      display: flex;
      align-items: center;
      padding-left: 5px;
    }
    .side .slot + .vgrip {
      margin-top: 11px;
    }
    .side .arrow {
      margin-left: 2px;
    }
    .docks {
      width: 222px;
      flex: none;
      display: flex;
      flex-direction: column;
      margin-right: 6px;
    }
    .docktitle {
      display: flex;
      align-items: center;
      gap: 6px;
      height: 11px;
      flex: none;
      padding-left: 2px;
      font-size: 7.2px;
      color: #333;
    }
    .splitter + .docktitle {
      margin-top: 1px;
    }
    .docktitle .dots {
      flex: 1;
      height: 4px;
      background: repeating-linear-gradient(90deg, #cdcdcd 0 1px, transparent 1px 3px);
    }
    .dockbtn {
      width: 9px;
      height: 9px;
      border: 1px solid #9a9a9a;
      background: #ececec;
      display: flex;
      align-items: center;
      justify-content: center;
      margin-left: -4px;
      font-size: 8px;
      line-height: 1;
      color: #111;
    }
    .docktools {
      display: flex;
      align-items: center;
      height: 27px;
      flex: none;
      padding-left: 1px;
    }
    .docktools .tool {
      width: 20.6px;
    }
    .tree {
      height: 269px;
      flex: none;
      box-sizing: border-box;
      display: flex;
      border: 1px solid #a9a9a9;
      background: #fff;
      margin: 0 1px;
    }
    .rows {
      flex: 1;
      overflow: hidden;
    }
    .row {
      display: flex;
      align-items: center;
      height: 12.15px;
      white-space: nowrap;
    }
    .guide {
      flex: none;
      width: 15px;
      align-self: stretch;
      background: linear-gradient(#d2d2d2, #d2d2d2) 7px 0 / 1px 100% no-repeat;
    }
    .exp {
      flex: none;
      width: 15px;
      align-self: stretch;
      display: flex;
      align-items: center;
      background: linear-gradient(#d2d2d2, #d2d2d2) 7px 0 / 1px 100% no-repeat,
        linear-gradient(#d2d2d2, #d2d2d2) 7px 6px / 8px 1px no-repeat;
    }
    .exp.top {
      background: linear-gradient(#d2d2d2, #d2d2d2) 7px 6px / 1px 100% no-repeat,
        linear-gradient(#d2d2d2, #d2d2d2) 7px 6px / 8px 1px no-repeat;
    }
    .exp b {
      width: 6px;
      height: 6px;
      margin-left: 3px;
      border: 1px solid #a2a2a2;
      background: #fff;
      position: relative;
      display: block;
    }
    .exp b::before {
      content: '';
      position: absolute;
      left: 1px;
      right: 1px;
      top: 2.5px;
      height: 1px;
      background: #555;
    }
    .exp b.plus::after {
      content: '';
      position: absolute;
      top: 1px;
      bottom: 1px;
      left: 2.5px;
      width: 1px;
      background: #555;
    }
    .row .ico {
      margin: 0 3px;
    }
    .sbar {
      width: 13px;
      flex: none;
      border-left: 1px solid #dcdcdc;
      background: #f2f2f2;
      display: flex;
      flex-direction: column;
      gap: 1px;
      padding: 0 0 1px 0;
      box-sizing: border-box;
    }
    .sbtn {
      height: 12px;
      flex: none;
      border: 1px solid #b9b9b9;
      box-sizing: border-box;
      background: #ececec;
      display: flex;
      align-items: center;
      justify-content: center;
    }
    .sbtn i {
      width: 0;
      height: 0;
      border: 3px solid transparent;
      border-bottom: 3.4px solid #111;
      border-top: 0;
    }
    .sbtn.down i {
      border-bottom: 0;
      border-top: 3.4px solid #111;
    }
    .thumb {
      height: 118px;
      flex: none;
      border: 1px solid #b0b0b0;
      box-sizing: border-box;
      background: #e9e9e9;
      margin-top: 1px;
    }
    .track {
      flex: 1;
    }
    .splitter {
      height: 5px;
      flex: none;
      display: flex;
      justify-content: center;
      align-items: center;
    }
    .splitter i {
      width: 70px;
      height: 3px;
      background: repeating-linear-gradient(90deg, #c9c9c9 0 1px, transparent 1px 3px);
    }
    .layers {
      flex: 1;
      margin-bottom: 1px;
      border: 2px solid #5f9bd3;
      background: #fff;
      box-sizing: border-box;
    }
    .layer {
      display: flex;
      align-items: center;
      height: 14px;
      background: linear-gradient(#d2d2d2, #d2d2d2) 8px 0 / 1px 7px no-repeat,
        linear-gradient(#d2d2d2, #d2d2d2) 8px 6px / 9px 1px no-repeat;
    }
    .check {
      width: 9px;
      height: 9px;
      margin-left: 15px;
      background: #f0f0f0;
      border: 1px solid #d0d0d0;
      display: flex;
      align-items: center;
      justify-content: center;
      font-size: 10px;
      font-weight: 700;
      line-height: 1;
      color: #111;
    }
    .pt {
      width: 5px;
      height: 5px;
      margin-left: 8px;
      border-radius: 50%;
      background: #1aa876;
    }
    .edit {
      flex: 1;
      height: 13px;
      margin-left: 7px;
      border: 1px solid #8d8d8d;
      border-width: 0 1px 1px 1px;
      font-size: 8.6px;
      font-weight: 700;
      text-decoration: underline;
      line-height: 13px;
      padding-left: 2px;
      color: #111;
    }
    .status {
      display: flex;
      align-items: center;
      height: 22px;
      flex: none;
      border-top: 1px solid #d6d6d6;
      box-sizing: border-box;
      font-size: 7.9px;
      padding-left: 383px;
    }
    .status .mouse {
      width: 22px;
      margin-right: 4px;
    }
    .field {
      height: 15px;
      flex: none;
      border: 1px solid #c9c9c9;
      background: #fff;
      box-sizing: border-box;
      display: flex;
      align-items: center;
      font-family: 'DejaVu Sans', sans-serif;
      font-size: 7.3px;
      color: #333;
      padding-left: 4px;
    }
    .coord {
      width: 102px;
      margin-left: 3px;
      justify-content: center;
      padding: 0;
    }
    .scale {
      width: 65px;
      margin: 0 4px 0 3px;
      justify-content: space-between;
      padding-right: 0;
    }
    .scale .arrowbox {
      width: 11px;
      height: 100%;
      background: #f0f0f0;
      border-left: 1px solid #c9c9c9;
      display: flex;
      align-items: center;
      justify-content: center;
    }
    .ampliar {
      margin-left: 9px;
    }
    .spin {
      width: 57px;
      justify-content: space-between;
      padding-right: 0;
      margin: 0 7px 0 2px;
    }
    .spin.rot {
      width: 58px;
      margin: 0 5px 0 7px;
    }
    .steps {
      width: 12px;
      height: 100%;
      display: flex;
      flex-direction: column;
      border-left: 1px solid #d4d4d4;
      background: #f0f0f0;
    }
    .steps span {
      flex: 1;
      display: flex;
      align-items: center;
      justify-content: center;
    }
    .steps i {
      width: 0;
      height: 0;
      border: 2.5px solid transparent;
      border-bottom: 3px solid #222;
      border-top: 0;
    }
    .steps .dn i {
      border-bottom: 0;
      border-top: 3px solid #222;
    }
    .render-box {
      width: 8px;
      height: 8px;
      background: #eee;
      border: 1px solid #cfcfcf;
      display: flex;
      align-items: center;
      justify-content: center;
      font-size: 9px;
      font-weight: 700;
      line-height: 1;
      margin-right: 4px;
      color: #111;
    }
    .crs-globe {
      margin: 0 6px 0 8px;
    }
    .crs {
      font-family: 'DejaVu Sans', sans-serif;
      font-size: 8.6px;
      letter-spacing: -0.2px;
    }
    .crs-msg {
      margin-left: 7px;
    }
    .taskbar {
      flex: none;
      height: 27px;
      display: flex;
      align-items: stretch;
      background: #0e0e0e;
      color: #ddd;
    }
    .start {
      width: 37px;
      flex: none;
      background: #050505;
      display: flex;
      align-items: center;
      justify-content: center;
    }
    .search {
      width: 260px;
      flex: none;
      box-sizing: border-box;
      background: #2d2d2d;
      color: #8a8a8a;
      font-size: 10.7px;
      display: flex;
      align-items: center;
      padding-left: 8px;
    }
    .taskicons {
      display: flex;
    }
    .task {
      width: 37.2px;
      display: flex;
      align-items: center;
      justify-content: center;
    }
    .task.on {
      background: #3a3e3f;
    }
    .tray {
      margin-left: auto;
      display: flex;
      align-items: center;
    }
    .tray .slot {
      width: 17px;
      display: flex;
      justify-content: center;
    }
    .clock {
      width: 48px;
      margin: 0 1px 0 7px;
      text-align: center;
      font-size: 8.6px;
      line-height: 12px;
      color: #e4e4e4;
      white-space: nowrap;
    }
  `;

  private renderTools(items: ToolItem[]) {
    return items.map((t) => {
      if (typeof t === 'string') return html`<div class="tool">${ico(t)}</div>`;
      if ('sep' in t) return html`<div class="sep" style="width:${t.sep}px"><i></i></div>`;
      if ('arrow' in t)
        return html`<div class="arrow ${t.dim ? 'dim' : ''}" style="width:${t.arrow}px"><i></i></div>`;
      return html`<div class="tool active">${ico(t.active)}</div>`;
    });
  }

  private renderRow(r: TreeRow, i: number) {
    const guides = Array.from({ length: r.level }, () => html`<span class="guide"></span>`);
    const mark = r.exp ? html`<b class=${r.exp === '+' ? 'plus' : ''}></b>` : nothing;
    return html`<div class="row">
      ${guides}
      <span class="exp ${i === 0 ? 'top' : ''}">${mark}</span>
      ${ico(r.icon, 12)}
      <span>${r.label}</span>
    </div>`;
  }

  private dockTitle(label: string) {
    return html`<div class="docktitle">
      <span class="dots"></span>
      <span>${label}</span>
      <span class="dots"></span>
      <span class="dockbtn">❐</span>
      <span class="dockbtn">✕</span>
    </div>`;
  }

  render() {
    return html`
      <div class="titlebar">
        ${ico('logo', 13)}
        <span class="name">QGIS 2.18.4</span>
        <span class="winbtn"><svg width="10" height="10"><path d="M1 5.500h8" stroke="#777"></path></svg></span>
        <span class="winbtn"><svg width="10" height="10"><path d="M1.500 3h6v6h-6zM3.500 3V1h5.500v6H7.500" fill="none" stroke="#555"></path></svg></span>
        <span class="winbtn"><svg width="10" height="10"><path d="M1 1l8 8M9 1l-8 8" stroke="#555"></path></svg></span>
      </div>
      <div class="menubar">${MENUS.map((m) => html`<span>${m}</span>`)}</div>
      <div class="toolbar"><span class="hgrip"></span>${this.renderTools(TOOLBAR_ONE)}</div>
      <div class="toolbar second"><span class="hgrip"></span>${this.renderTools(TOOLBAR_TWO)}</div>

      <div class="main">
        <div class="side">
          <div class="vgrip"></div>
          ${SIDE_TOOLS.map(
            ([name, drop]) => html`<div class="slot">
              ${ico(name, 22)}${drop ? html`<div class="arrow" style="width:8px"><i></i></div>` : nothing}
            </div>`,
          )}
          <div class="vgrip"></div>
        </div>

        <div class="docks">
          ${this.dockTitle('Navegador')}
          <div class="docktools">
            ${NAV_TOOLS.map((n) => html`<div class="tool">${ico(n, 15)}</div>`)}
          </div>
          <div class="tree">
            <div class="rows">${TREE.map((r, i) => this.renderRow(r, i))}</div>
            <div class="sbar">
              <div class="sbtn"><i></i></div>
              <div class="thumb"></div>
              <div class="track"></div>
              <div class="sbtn"><i></i></div>
              <div class="sbtn down"><i></i></div>
            </div>
          </div>
          <div class="splitter"><i></i></div>
          ${this.dockTitle('Camadas')}
          <div class="docktools">
            <div class="tool">${ico('brush', 15)}</div>
            <div class="tool">${ico('addGroup', 15)}</div>
            <div class="tool">${ico('eye', 15)}</div>
            <div class="tool">${ico('filter', 15)}</div>
            <div class="tool">${ico('epsilonGray', 15)}</div>
            <div class="arrow dim" style="width:9px"><i></i></div>
            <div class="tool">${ico('expand', 15)}</div>
            <div class="tool">${ico('collapse', 15)}</div>
            <div class="tool">${ico('removeBox', 15)}</div>
          </div>
          <div class="layers">
            <div class="layer">
              <span class="check">✖</span>
              <span class="pt"></span>
              <span class="edit">pontos_class</span>
            </div>
          </div>
        </div>

        <track-map></track-map>
      </div>

      <div class="status">
        <span>Coordenada</span>
        <span class="field coord">-85.892828,32.445311</span>
        <div class="tool mouse">${ico('mouse', 14)}</div>
        <span>Escala</span>
        <span class="field scale">1:1.202<span class="arrowbox"><span class="arrow"><i></i></span></span></span>
        ${ico('lock', 14)}
        <span class="ampliar">Ampliar</span>
        <span class="field spin">100%<span class="steps"><span><i></i></span><span class="dn"><i></i></span></span></span>
        <span>Rotação</span>
        <span class="field spin rot">0,0<span class="steps"><span><i></i></span><span class="dn"><i></i></span></span></span>
        <span class="render-box">✖</span>
        <span>Renderizar</span>
        <span class="crs-globe">${ico('statGlobe', 13)}</span>
        <span class="crs">EPSG:4326</span>
        <span class="crs-msg">${ico('msg', 13)}</span>
      </div>

      <div class="taskbar">
        <div class="start">${ico('win', 14)}</div>
        <div class="search">Pesquisar na Web e no Windows</div>
        <div class="taskicons">
          <div class="task">${ico('taskview', 18)}</div>
          ${TASK_APPS.map((a) => html`<div class="task">${ico(a, 18)}</div>`)}
          <div class="task on">${ico('qgis', 18)}</div>
        </div>
        <div class="tray">
          <span class="slot">${ico('trayUp', 11)}</span>
          <span class="slot">${ico('trayBat', 12)}</span>
          <span class="slot">${ico('trayWifi', 12)}</span>
          <span class="slot">${ico('traySound', 12)}</span>
          <span class="slot">${ico('trayChat', 13)}</span>
          <div class="clock">11:27<br />25/03/2017</div>
        </div>
      </div>
    `;
  }
}
